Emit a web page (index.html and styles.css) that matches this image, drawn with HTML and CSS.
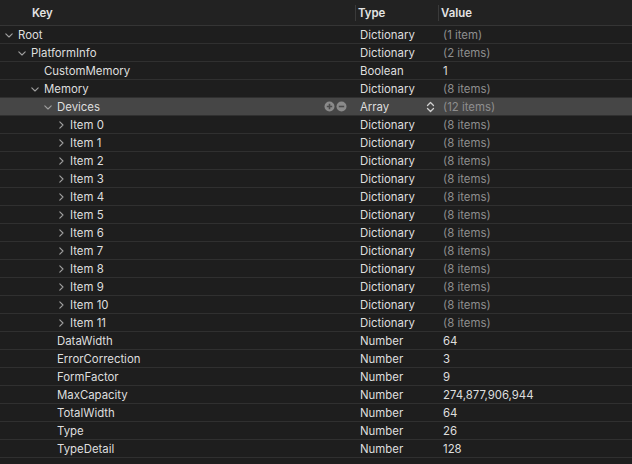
FILE: index.html
```html
<!DOCTYPE html>
<html>
<head>
<meta charset="utf-8">
<link rel="stylesheet" href="styles.css">
</head>
<body>
<div class="plist">
  <div class="head">
    <div class="hcell hkey">Key</div>
    <div class="hcell htype">Type</div>
    <div class="hcell hval">Value</div>
  </div>
  <div class="rows" id="rows"></div>
</div>
<script src="app.js"></script>
</body>
</html>
```
FILE: app.js
```js
const data = [
  [0,'down','Root','Dictionary','(1 item)',true],
  [1,'down','PlatformInfo','Dictionary','(2 items)',true],
  [2,'','CustomMemory','Boolean','1',false],
  [2,'down','Memory','Dictionary','(8 items)',true],
  [3,'down','Devices','Array','(12 items)',true,'sel'],
];
for (let i=0;i<12;i++) data.push([4,'right','Item '+i,'Dictionary','(8 items)',true]);
[['DataWidth','64'],['ErrorCorrection','3'],['FormFactor','9'],['MaxCapacity','274,877,906,944'],['TotalWidth','64'],['Type','26'],['TypeDetail','128']].forEach(([k,v])=>data.push([3,'',k,'Number',v,false]));

const down = '<svg class="chev" width="10" height="10" viewBox="0 0 10 10"><path d="M1.8 3.8 L5 7 L8.2 3.8" fill="none" stroke="#a0a0a0" stroke-width="1.1" stroke-linecap="round" stroke-linejoin="round"/></svg>';
const right = '<svg class="chev" width="10" height="10" viewBox="0 0 10 10"><path d="M3.8 1.8 L7 5 L3.8 8.2" fill="none" stroke="#a0a0a0" stroke-width="1.1" stroke-linecap="round" stroke-linejoin="round"/></svg>';
const blank = '<span class="chev"></span>';
const pm = '<span class="pm"><svg width="24" height="11" viewBox="0 0 24 11"><circle cx="5.5" cy="5.5" r="5" fill="#8a8a8a"/><path d="M2.8 5.5h5.4M5.5 2.8v5.4" stroke="#4a4a4a" stroke-width="1.6"/><circle cx="17.5" cy="5.5" r="5" fill="#8a8a8a"/><path d="M14.8 5.5h5.4" stroke="#4a4a4a" stroke-width="1.6"/></svg></span>';
const updown = '<svg class="ud" width="9" height="12" viewBox="0 0 9 12"><path d="M1.5 4.5 L4.5 1.5 L7.5 4.5 M1.5 7.5 L4.5 10.5 L7.5 7.5" fill="none" stroke="#d0d0d0" stroke-width="1.3" stroke-linecap="round" stroke-linejoin="round"/></svg>';

const rows = document.getElementById('rows');
data.forEach(([lvl,ch,k,t,v,dim,sel])=>{
  const r = document.createElement('div');
  r.className = 'row' + (sel ? ' sel' : '');
  const c = ch==='down'?down:ch==='right'?right:blank;
  r.innerHTML = `<div class="key" style="padding-left:${4+lvl*13}px">${c}<span class="ktext">${k}</span>${sel?pm:''}</div>`+
    `<div class="type"><span>${t}</span>${sel?updown:''}</div>`+
    `<div class="val${dim?' dim':''}">${v}</div>`;
  rows.appendChild(r);
});
```
FILE: styles.css
```css
html, body {
  margin: 0;
  padding: 0;
  background: #1e1e1e;
}
body {
  font-family: Inter, "Liberation Sans", sans-serif;
  font-size: 11.4px;
  color: #dedede;
  width: 632px;
  height: 464px;
  overflow: hidden;
}
.plist {
  display: flex;
  flex-direction: column;
}
.head {
  display: grid;
  grid-template-columns: 355px 83px 1fr;
  height: 25px;
  border-bottom: 1px solid #353535;
  background: #222222;
  align-items: center;
}
.hcell {
  font-weight: 600;
  color: #e4e4e4;
  height: 16px;
  line-height: 16px;
}
.hkey { padding-left: 32px; }
.htype, .hval {
  border-left: 1px solid #3a3a3a;
  padding-left: 2px;
}
.rows {
  display: flex;
  flex-direction: column;
}
.row {
  display: grid;
  grid-template-columns: 355px 83px 1fr;
  height: 17px;
  border-bottom: 1px solid #303030;
  align-items: center;
  background: #1e1e1e;
}
.row.sel {
  background: #464646;
}
.key {
  display: flex;
  align-items: center;
  height: 17px;
}
.chev {
  display: inline-block;
  width: 10px;
  height: 10px;
  margin-right: 4px;
  flex: none;
}
.ktext { flex: none; }
.pm {
  margin-left: auto;
  margin-right: 7px;
  display: flex;
  align-items: center;
}
.type {
  display: flex;
  align-items: center;
  padding-left: 5px;
  padding-right: 3px;
  height: 17px;
}
.ud { margin-left: auto; }
.val {
  padding-left: 5px;
}
.val.dim { color: #8e8e8e; }
```
